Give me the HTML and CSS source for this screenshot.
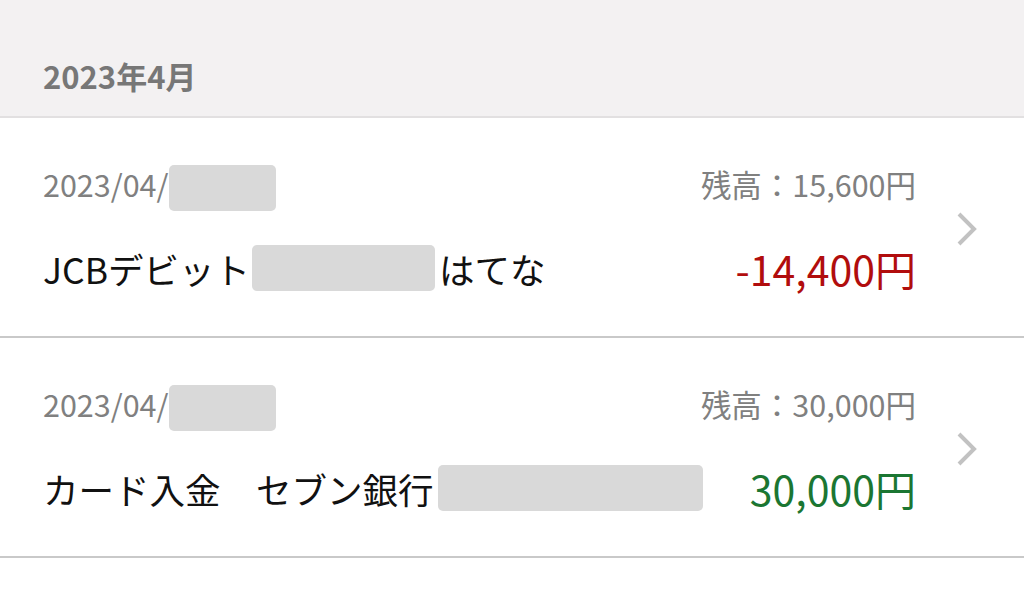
FILE: index.html
```html
<!DOCTYPE html>
<html lang="ja">
<head>
  <meta charset="UTF-8">
  <meta name="viewport" content="width=device-width, initial-scale=1.0">
  <title>入出金明細</title>
  <link rel="stylesheet" href="styles.css">
</head>
<body>
  <div class="month-header">2023年4月</div>

  <ul class="history-list">
    <li class="history-item">
      <div class="item-body">
        <div class="item-top">
          <span class="item-date">2023/04/<span class="mask mask-date"></span></span>
          <span class="item-balance">残高：15,600円</span>
        </div>
        <div class="item-bottom">
          <span class="item-desc">JCBデビット<span class="mask mask-desc1"></span>はてな</span>
          <span class="item-amount minus">-14,400円</span>
        </div>
      </div>
      <div class="item-chevron">
        <svg width="22" height="36" viewBox="0 0 22 36"><path d="M3 3 L18 18 L3 33" fill="none" stroke="#c2c2c2" stroke-width="4"/></svg>
      </div>
    </li>
    <li class="history-item">
      <div class="item-body">
        <div class="item-top">
          <span class="item-date">2023/04/<span class="mask mask-date"></span></span>
          <span class="item-balance">残高：30,000円</span>
        </div>
        <div class="item-bottom">
          <span class="item-desc">カード入金　セブン銀行<span class="mask mask-desc2"></span></span>
          <span class="item-amount plus">30,000円</span>
        </div>
      </div>
      <div class="item-chevron">
        <svg width="22" height="36" viewBox="0 0 22 36"><path d="M3 3 L18 18 L3 33" fill="none" stroke="#c2c2c2" stroke-width="4"/></svg>
      </div>
    </li>
  </ul>
</body>
</html>
```

FILE: styles.css
```css
body {
  margin: 0;
  background: #fff;
  font-family: "Noto Sans CJK JP", "Noto Sans", sans-serif;
  color: #111;
}
.month-header {
  background: #f3f1f2;
  height: 118px;
  padding: 54px 0 0 43px;
  box-sizing: border-box;
  font-size: 31px;
  line-height: 44px;
  font-weight: bold;
  color: #777;
  border-bottom: 2px solid #e2e0e1;
}
.history-list {
  list-style-type: none;
  margin: 0;
  padding: 0;
}
.history-item {
  display: flex;
  align-items: center;
  height: 218px;
  padding-left: 43px;
  border-bottom: 2px solid #c9c9c9;
}
.item-body {
  flex: 1;
}
.item-top, .item-bottom {
  display: flex;
  justify-content: space-between;
  align-items: center;
}
.item-top {
  height: 46px;
  font-size: 30.5px;
  color: #808080;
}
.item-bottom {
  height: 50px;
  margin-top: 36px;
}
.item-date, .item-desc {
  display: flex;
  align-items: center;
}
.item-desc {
  font-size: 35.5px;
  color: #111;
}
.item-amount {
  font-size: 41px;
}
.minus {
  color: #b10d0d;
}
.plus {
  color: #1b7632;
}
.mask {
  display: inline-block;
  background: #d9d9d9;
  border-radius: 5px;
  height: 46px;
}
.mask-date {
  width: 107px;
  margin: 8px 0 0 1px;
}
.mask-desc1 {
  width: 183px;
  margin: 0 4px 0 2px;
}
.mask-desc2 {
  width: 265px;
  margin-left: 4px;
}
.item-chevron {
  width: 108px;
  display: flex;
  padding: 4px 0 0 40px;
  box-sizing: border-box;
}
```
